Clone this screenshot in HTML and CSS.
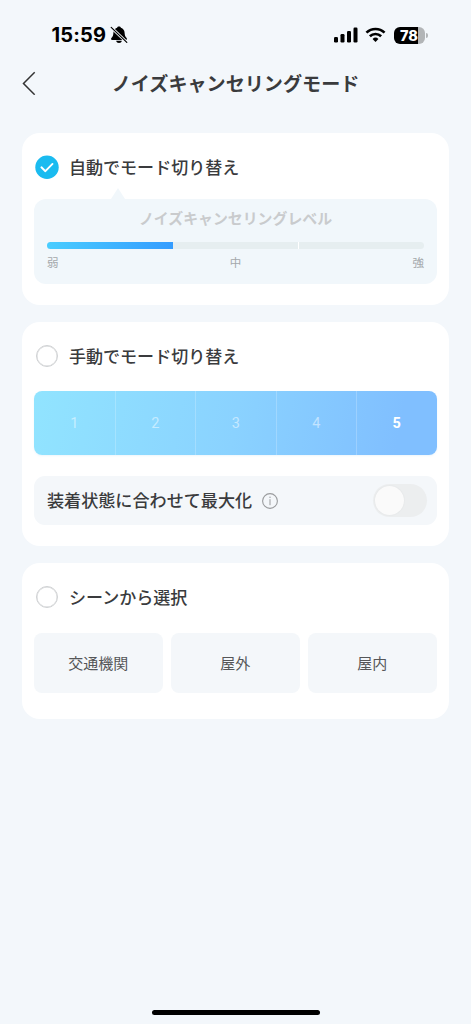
FILE: index.html
```html
<!DOCTYPE html>
<html lang="ja">
<head>
<meta charset="utf-8">
<meta name="viewport" content="width=device-width, initial-scale=1">
<title>ノイズキャンセリングモード</title>
<link rel="stylesheet" href="styles.css">
</head>
<body>
<div class="screen">
  <div class="status">
    <span class="time">15:59</span>
    <svg class="bell" width="18" height="18" viewBox="0 0 18 18">
      <path d="M9 .6c1 0 1.700.5 1.900 1.200 2.300.8 3.600 2.600 3.700 5 .1 2.900.7 3.700 2 5.200.7.800.4 1.900-.7 1.900H2.100c-1.100 0-1.400-1.100-.7-1.900 1.300-1.500 1.900-2.300 2-5.200.1-2.400 1.400-4.200 3.700-5C7.300 1.100 8 .6 9 .6z" fill="#000"/>
      <path d="M6.200 14.800h5.600c-.2 1.400-1.400 2.200-2.800 2.200s-2.600-.8-2.800-2.200z" fill="#000"/>
      <path d="M1 1.300 17.200 16.800" stroke="#f3f7fa" stroke-width="2.900"/>
      <path d="M1.200 1.400 16.800 16.400" stroke="#000" stroke-width="1.200" stroke-linecap="round"/>
    </svg>
    <div class="indicators">
      <svg width="24" height="16" viewBox="0 0 24 16">
        <rect x="0" y="10" width="4" height="5.500" rx="1.200"/>
        <rect x="6.500" y="7" width="4" height="8.500" rx="1.200"/>
        <rect x="13" y="4" width="4" height="11.500" rx="1.200"/>
        <rect x="19.500" y=".5" width="4" height="15" rx="1.200"/>
      </svg>
      <svg class="wifi" width="21" height="16" viewBox="0 0 22 16" fill="none" stroke="#000" stroke-width="2.700">
        <path d="M1.500 5.600a13.500 13.500 0 0 1 19 0"/>
        <path d="M5.100 9.300a8.400 8.400 0 0 1 11.800 0"/>
        <path d="M11 15.300 7.900 12.200a4.400 4.400 0 0 1 6.200 0z" fill="#000" stroke="none"/>
      </svg>
      <div class="battery"><span>78</span></div>
      <i class="battery-tip"></i>
    </div>
  </div>
  <header class="nav">
    <svg class="back" width="14" height="24" viewBox="0 0 14 24" fill="none" stroke="#333" stroke-width="1.500"><path d="M12.700 1.300 1.500 12.500 12.700 23.700"/></svg>
    <h1>ノイズキャンセリングモード</h1>
  </header>
  <main>
    <section class="card auto">
      <div class="option">
        <svg width="24" height="24" viewBox="0 0 24 24"><circle cx="12" cy="12.300" r="11.700" fill="#1abbf0"/><path d="m6.400 12.300 4 3.900 7.100-7.300" fill="none" stroke="#fff" stroke-width="1.900" stroke-linecap="round" stroke-linejoin="round"/></svg>
        <h2>自動でモード切り替え</h2>
      </div>
      <div class="level">
        <h3>ノイズキャンセリングレベル</h3>
        <div class="track"><i class="on"></i><i></i><i></i></div>
        <div class="scale"><span>弱</span><span>中</span><span>強</span></div>
      </div>
    </section>
    <section class="card manual">
      <div class="option"><i class="radio"></i><h2>手動でモード切り替え</h2></div>
      <div class="steps"><span>1</span><span>2</span><span>3</span><span>4</span><span class="current">5</span></div>
      <div class="fit">
        <span class="fit-label">装着状態に合わせて最大化</span>
        <svg width="16" height="16" viewBox="0 0 16 16" fill="none" stroke="#999b9d"><circle cx="8" cy="8" r="7.400" stroke-width="1.100"/><path d="M8 6.200v6" stroke-width="1"/><circle cx="8" cy="4.200" r=".7" fill="#999b9d" stroke="none"/></svg>
        <div class="switch"></div>
      </div>
    </section>
    <section class="card scene">
      <div class="option"><i class="radio"></i><h2>シーンから選択</h2></div>
      <div class="scenes"><span>交通機関</span><span>屋外</span><span>屋内</span></div>
    </section>
  </main>
  <div class="home"></div>
</div>
</body>
</html>
```
FILE: styles.css
```css
* { box-sizing: border-box; }
body { margin: 0; font-family: "Noto Sans CJK JP", sans-serif; color: #3a3b3d; background: #f3f7fb; }
h1, h2, h3 { margin: 0; }
svg { display: block; flex: none; }
.screen { height: 1024px; display: flex; flex-direction: column; overflow: hidden; }

.status { height: 60px; padding: 10px 43.500px 0 51.500px; display: flex; align-items: center; }
.time { font: 750 20px/24px Inter, sans-serif; color: #000; letter-spacing: .15px; width: 55px; white-space: nowrap; }
.bell { margin-left: 3.500px; }
.indicators { margin-left: auto; display: flex; align-items: center; }
.wifi { margin-left: 7.500px; }
.battery { margin-left: 7.500px; width: 31px; height: 17px; border-radius: 6px; background: linear-gradient(90deg, #000 78%, #b2b5b7 78%); display: flex; justify-content: center; }
.battery span { font: 800 14.500px/17px Inter, sans-serif; color: #fff; }
.battery-tip { margin-left: 1px; width: 2px; height: 5px; border-radius: 0 2px 2px 0; background: #b2b5b7; }

.nav { height: 73px; padding: 0 22px 27px; display: grid; grid-template-columns: 14px 1fr 14px; align-items: center; }
.nav h1 { font-size: 19.100px; line-height: 28px; font-weight: 700; text-align: center; white-space: nowrap; padding-bottom: 1px; }

main { padding: 0 22px; display: flex; flex-direction: column; gap: 17px; }
.card { background: #fff; border-radius: 18px; padding: 22px 12.500px 0 12px; }
.auto { height: 172px; }
.manual { height: 224px; }
.scene { height: 156px; }
.option { height: 24px; display: flex; align-items: center; gap: 10px; }
.option h2 { font-size: 17.050px; line-height: 24px; font-weight: 500; padding-bottom: 1px; }
.radio { width: 22px; height: 22px; border: 1.800px solid #cfd1d3; border-radius: 50%; margin: 0 1px 0 2px; box-shadow: inset 0 0 0 .4px #cfd1d3; }
.auto .option { padding-left: 1px; }

.level { position: relative; height: 85px; margin-top: 20px; padding: 8px 12.500px 0 13px; border-radius: 12px; background: #f1f7fb; }
.level::before { content: ""; position: absolute; left: 77px; top: -11px; border: solid transparent; border-width: 0 7px 11px; border-bottom-color: #f1f7fb; }
.level h3 { font-size: 14.900px; line-height: 22px; font-weight: 700; color: #c9cbcd; text-align: center; }
.track { display: grid; grid-template-columns: 1fr 1fr 1fr; height: 6.500px; margin-top: 13px; border-radius: 4px; overflow: hidden; background: #e6eef0; }
.track .on { background: linear-gradient(90deg, #49cdff, #349cff); }
.track i + i + i { border-left: 1px solid #fff; }
.scale { display: flex; justify-content: space-between; margin-top: 5px; font-size: 11.500px; line-height: 16px; color: #a4a8ab; }

.steps { height: 64px; margin-top: 23px; border-radius: 8px; display: grid; grid-template-columns: repeat(5, 1fr); background: linear-gradient(100deg, #91e4ff, #8ad2ff 50%, #80bfff 90%); box-shadow: 0 1px 2px #9fc8ea30; overflow: hidden; }
.steps span { font: 400 14.500px/65px Roboto, sans-serif; text-align: center; color: #ffffff80; border-left: 1px solid #ffffff35; }
.steps span:first-child { border-left: 0; }
.steps .current { font-weight: 700; color: #fff; }
.fit { height: 49px; margin-top: 21px; padding: 0 9.500px 0 13px; border-radius: 11px; background: #f4f7fa; display: flex; align-items: center; font-size: 17.100px; font-weight: 500; }
.fit-label { padding-bottom: 2px; }
.fit svg { margin-left: 9.500px; }
.switch { margin-left: auto; width: 54px; height: 33px; border-radius: 17px; background: #eceeef; padding: 2px; }
.switch::before { content: ""; display: block; width: 29px; height: 29px; border-radius: 50%; background: #fafafa; box-shadow: 0 0 2px #00000010; }

.scenes { margin-top: 24px; display: grid; grid-template-columns: 1fr 1fr 1fr; gap: 8.500px; }
.scenes span { height: 60px; padding-bottom: 2px; border-radius: 8px; background: #f4f7fa; display: flex; align-items: center; justify-content: center; font-size: 15px; color: #555658; }

.home { width: 168px; height: 5px; border-radius: 3px; background: #000; margin: auto auto 9px; }
```
